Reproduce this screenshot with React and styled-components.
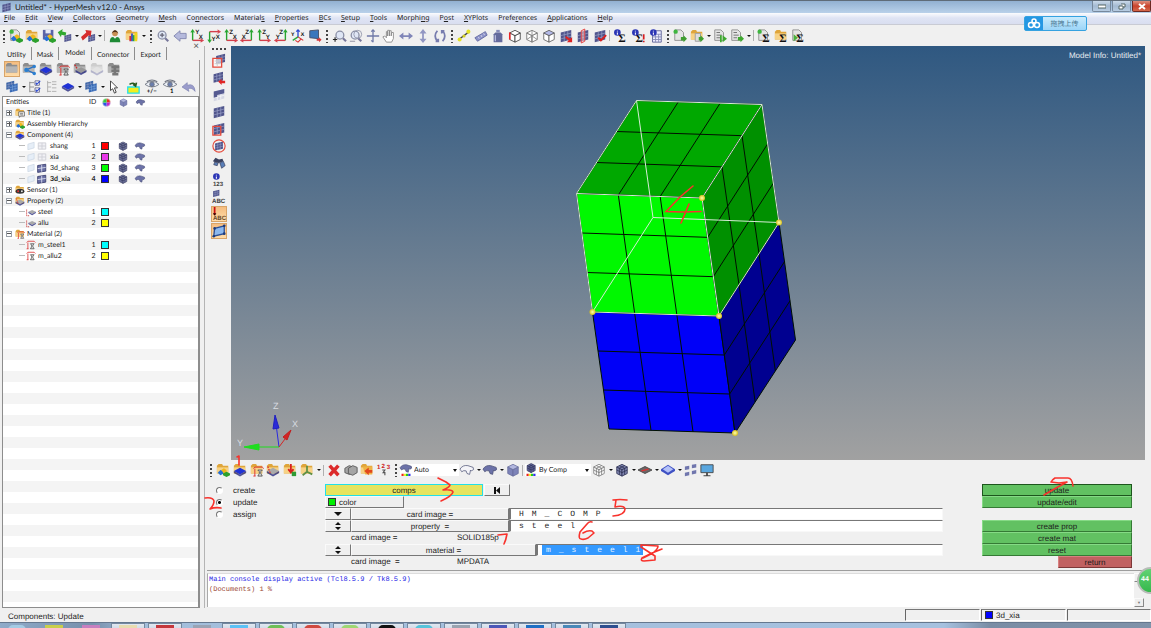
import React, { useState } from 'react';
import styled, { createGlobalStyle } from 'styled-components';

const GlobalStyle = createGlobalStyle`
  * { box-sizing: border-box; }
  body {
    margin: 0;
    background: #f0f0f0;
    color: #1c1c1c;
    font-family: "Liberation Sans", Arial, sans-serif;
    font-size: 8px;
    text-rendering: geometricPrecision;
  }
  button, input, select { font: inherit; color: inherit; margin: 0; text-rendering: inherit; }
`;

const Shell = styled.div`
  height: 100vh;
  display: flex;
  flex-direction: column;
  overflow: hidden;
  position: relative;
`;
const TitleBar = styled.header`
  height: 13px;
  display: flex;
  align-items: center;
  border-top: 1px solid #5f6b78;
  background: linear-gradient(#92b0d1, #b9d1ea);
  padding-left: 1px;
`;
const Title = styled.h1`
  flex: 1;
  margin: 0 0 0 3px;
  font: 400 8px/12px Lato, sans-serif;
`;
const WindowButton = styled.button`
  width: 19px;
  height: 11px;
  padding: 0;
  margin-left: 1px;
  display: flex;
  align-items: center;
  justify-content: center;
  align-self: flex-start;
  border: 1px solid ${props => props.$close ? '#6d2a22' : '#76889c'};
  border-top: none;
  border-radius: 0 0 2px 2px;
  background: ${props => props.$close
    ? 'linear-gradient(#dd8f7e, #c8432c 50%, #d4674b)'
    : 'linear-gradient(#cbdaea, #a3b9d1 50%, #b7cce2)'};
`;
const MenuBar = styled.nav`
  height: 12px;
  display: flex;
  gap: 10px;
  padding-left: 4px;
  background: linear-gradient(#fbfcfe, #dfe4f4 45%, #d9def0);
  border-bottom: 1px solid #c9cbd4;
`;
const MenuLink = styled.a`
  font: 7px/12px "Noto Sans", sans-serif;
  color: #222;
  text-decoration: none;
`;
const ToolBar = styled.div`
  height: ${props => props.$height || 21}px;
  flex: none;
  display: flex;
  align-items: center;
  position: relative;
`;
const Group = styled.div`
  width: ${props => props.$width}px;
  flex: none;
  display: flex;
  justify-content: space-between;
`;
const Handle = styled.span`
  width: 8px;
  height: 14px;
  flex: none;
  background: radial-gradient(circle at 4px 2px, #444 1px, transparent 1px) 0 0 / 8px 4px;
`;
const Divider = styled.span`
  width: 1px;
  height: 11px;
  margin: 0 2px 0 1px;
  flex: none;
  background: #b0b0b0;
`;
const Drop = styled.button`
  width: 7px;
  height: 14px;
  padding: 0;
  border: none;
  background: none;
  flex: none;
  display: flex;
  align-items: center;
  justify-content: center;
  &::after {
    content: "";
    border: 2px solid transparent;
    border-top-color: #111;
    border-bottom: none;
  }
`;
const IconButton = styled.button`
  width: 16px;
  height: 16px;
  padding: 0;
  flex: none;
  display: block;
  border: 1px solid ${props => props.$active ? '#d8a468' : 'transparent'};
  background: ${props => props.$active ? 'linear-gradient(#f5bd80, #ffdca8)' : 'none'};
`;
const Glyph = styled.svg`
  display: block;
  width: ${props => props.$size || 14}px;
  height: ${props => props.$size || 14}px;
  flex: none;
  overflow: visible;
`;

const Body = styled.div`
  flex: 1;
  min-height: 0;
  display: flex;
`;
const Browser = styled.aside`
  width: 205px;
  flex: none;
  display: flex;
  flex-direction: column;
  padding: 0 4px 0 2px;
  border-right: 1px solid #b4b4b4;
  position: relative;
  font-family: Lato, sans-serif;
  font-size: 7px;
`;
const CloseTab = styled.button`
  position: absolute;
  top: -4px;
  right: 5px;
  border: none;
  background: none;
  padding: 0;
  font-size: 10px;
  line-height: 8px;
  color: #555;
`;
const Tabs = styled.div`
  height: 14px;
  display: flex;
  padding-top: 1px;
`;
const Tab = styled.button`
  height: 13px;
  border: none;
  border-right: 1px solid #8d8d8d;
  background: none;
  padding: ${props => props.$active ? '0 6px 2px' : '2px 5px 0'};
  font-size: 7px;
`;
const BrowserTools = styled.div`
  height: 18px;
  display: flex;
  align-items: center;
  padding-left: 2px;
  gap: ${props => props.$gap || 0}px;
  border-right: 1px solid #9a9a9a;
`;
const TreePane = styled.div`
  flex: 1;
  min-height: 0;
  border: 1px solid #8d8d8d;
  border-width: 1px 2px 1px 1px;
  background: repeating-linear-gradient(#f4f4f4 0 11px, #fff 11px 22px) 0 10px;
  overflow: hidden;
`;
const TreeTable = styled.table`
  width: 100%;
  border-collapse: collapse;
  table-layout: fixed;
  th {
    height: 10px;
    padding: 0 0 0 3px;
    font-weight: 400;
    text-align: left;
    background: #fff;
    line-height: 9px;
  }
  th svg { margin-left: -2px; }
  td { height: 11px; padding: 0; line-height: 10px; }
`;
const Col = styled.col`
  width: ${props => props.$width ? `${props.$width}px` : 'auto'};
`;
const NodeCell = styled.div`
  display: flex;
  align-items: center;
  gap: 1px;
  height: 11px;
  padding-left: ${props => props.$depth ? 16 : 3}px;
  font-weight: ${props => props.$bold ? 700 : 400};
  white-space: nowrap;
`;
const NodeText = styled.span`
  padding-left: ${props => props.$wide ? 2 : 1}px;
`;
const Branch = styled.span`
  width: 6px;
  height: 1px;
  flex: none;
  background: #bbb;
`;
const Expander = styled.button`
  width: 6px;
  height: 6px;
  flex: none;
  padding: 0;
  margin-right: 2px;
  border: 1px solid #9aa0a8;
  background: linear-gradient(#555, #555) center / 4px 1px no-repeat,
    linear-gradient(#555, #555) center / 1px ${props => props.$open ? 1 : 4}px no-repeat, #fff;
`;
const IdCell = styled.td`
  text-align: center;
  font-weight: ${props => props.$bold ? 700 : 400};
`;
const Swatch = styled.span`
  display: inline-block;
  width: 8px;
  height: 8px;
  border: 1px solid #333;
  background: ${props => props.$color};
  vertical-align: middle;
`;

const Work = styled.main`
  flex: 1;
  min-width: 0;
  display: flex;
  flex-direction: column;
  padding: 0 6px 0 2px;
`;
const Stage = styled.div`
  flex: 1;
  min-height: 0;
  display: flex;
`;
const SideTools = styled.div`
  width: 24px;
  flex: none;
  display: flex;
  flex-direction: column;
  align-items: center;
  gap: 1px;
  padding-right: 1px;
  &::before {
    content: "";
    width: 15px;
    height: 6px;
    background: radial-gradient(circle at 2px 3px, #444 1px, transparent 1px) 0 0 / 4px 8px;
  }
`;
const Viewport = styled.section`
  flex: 1;
  min-width: 0;
  position: relative;
  background: linear-gradient(#2f5881, #a1a1a1);
`;
const Scene = styled.svg`
  display: block;
  width: 100%;
  height: 100%;
`;
const ModelInfo = styled.p`
  position: absolute;
  top: 5px;
  right: 4px;
  margin: 0;
  color: #e8edf2;
  line-height: 10px;
`;
const Combo = styled.label`
  display: flex;
  align-items: center;
  gap: 2px;
  flex: none;
  width: ${props => props.$width}px;
  height: 12px;
  background: #fff;
  select {
    flex: 1;
    min-width: 0;
    appearance: none;
    border: none;
    background: none;
    padding: 0;
    font: 7px/11px Lato, sans-serif;
  }
  &::after {
    content: "";
    margin: 0 2px 0 0;
    border: 2px solid transparent;
    border-top: 3px solid #111;
    border-bottom: none;
  }
`;

const Panel = styled.form`
  height: 91px;
  flex: none;
  display: flex;
  padding: 4px 13px 0 9px;
  border-bottom: 1px solid #9d9d9d;
`;
const Modes = styled.div`
  width: 109px;
  flex: none;
  position: relative;
`;
const Mode = styled.label`
  display: flex;
  align-items: center;
  gap: 10px;
  height: 12px;
  input {
    appearance: none;
    width: 7px;
    height: 7px;
    border-radius: 50%;
    border: 1px solid;
    border-color: #777 #fff #fff #777;
    background: #fff;
  }
  input:checked { background: radial-gradient(circle, #000 1px, #fff 2px); }
`;
const Fields = styled.div`
  flex: 1;
  min-width: 0;
  position: relative;
`;
const Row = styled.div`
  display: flex;
  height: 12px;
  padding-left: ${props => props.$indent || 0}px;
  line-height: 12px;
`;
const FlatButton = styled.button`
  width: ${props => props.$width}px;
  height: 12px;
  flex: none;
  padding: 0 4px 0 ${props => props.$left ? 2 : 4}px;
  display: flex;
  align-items: center;
  gap: 3px;
  justify-content: ${props => props.$left ? 'flex-start' : 'center'};
  border: 1px solid;
  border-color: #fafafa #777 #777 #fafafa;
  background: #efefef;
  line-height: 9px;
`;
const CompsButton = styled(FlatButton)`
  background: #e6e45e;
  border-color: #22e0e8;
  margin-right: 1px;
`;
const Entry = styled.div`
  flex: 1;
  min-width: 0;
  height: 12px;
  border: 1px solid;
  border-color: #777 #f8f8f8 #f8f8f8 #777;
  border-left-width: 2px;
  background: #fff;
  padding-left: ${props => props.$selected ? 4 : 8}px;
  input {
    display: block;
    width: ${props => props.$selected ? '101px' : '100%'};
    height: 10px;
    border: none;
    outline: none;
    padding: 1px 0 0 ${props => props.$selected ? 4 : 0}px;
    font: 8px/9px "Liberation Mono", monospace;
    letter-spacing: 8px;
    color: ${props => props.$selected ? '#e9f4ff' : '#222'};
    background: ${props => props.$selected ? '#3399ff' : 'none'};
  }
`;
const Plain = styled.span`
  width: ${props => props.$width}px;
`;
const Actions = styled.div`
  width: 150px;
  flex: none;
  margin-left: 39px;
  position: relative;
`;
const ActionButton = styled.button`
  display: block;
  width: ${props => props.$danger ? 74 : 150}px;
  height: 12px;
  margin-top: ${props => props.$spaced ? 12 : 0}px;
  margin-left: ${props => props.$danger ? 'auto' : 0};
  padding: 0;
  line-height: 9px;
  border: 1px solid;
  border-color: ${props => props.$danger ? '#d98080 #7d3838 #7d3838 #d98080' : '#86da86 #357a35 #357a35 #86da86'};
  background: ${props => props.$danger ? '#c16161' : '#62c162'};
  outline: ${props => props.$focused ? '1px solid #1d561d' : 'none'};
  outline-offset: -1px;
`;
const Console = styled.div`
  height: 37px;
  flex: none;
  display: flex;
  padding-top: 2px;
  padding-bottom: 1px;
`;
const Output = styled.pre`
  flex: 1;
  margin: 0;
  padding: 1px;
  background: #fff;
  border-left: 1px solid #aaa;
  border-top: 1px solid #ddd;
  font: 7px/10px "Liberation Mono", monospace;
  color: #9b4a36;
  b { font-weight: 400; color: #2525e6; }
`;
const Scroll = styled.div`
  width: 11px;
  display: flex;
  flex-direction: column;
  justify-content: space-between;
`;
const ScrollButton = styled.button`
  width: 10px;
  height: 9px;
  padding: 0;
  border: 1px solid;
  border-color: #fafafa #888 #888 #fafafa;
  background: #efefef;
  font-size: 4px;
  line-height: 6px;
  color: #777;
`;
const StatusBar = styled.footer`
  height: 14px;
  flex: none;
  display: flex;
  align-items: center;
  padding-left: 8px;
`;
const StatusText = styled.span`
  flex: 1;
  line-height: 12px;
  padding-top: 3px;
`;
const StatusCell = styled.span`
  width: ${props => props.$width}px;
  height: 12px;
  display: flex;
  align-items: center;
  gap: 3px;
  padding-left: 3px;
  margin-left: 1px;
  border: 1px solid;
  border-color: #777 #fff #fff #666;
`;
const TaskBar = styled.div`
  height: 6px;
  flex: none;
  display: flex;
  border-top: 1px solid #65788f;
  background: linear-gradient(90deg, #8fabc9, #7790ac 8%, #a3bedb 12%, #a6c1df 82%, #7a8da5 86%, #8093aa);
  overflow: hidden;
`;
const Task = styled.button`
  width: 34px;
  height: 12px;
  flex: none;
  margin-right: 3px;
  padding: 1px 0 0;
  border: 1px solid ${props => props.$bare ? 'transparent' : '#74889f'};
  background: ${props => props.$bare ? 'none' : 'linear-gradient(#e1e8f1, #bdcbdc)'};
  &::before {
    content: "";
    display: block;
    width: 18px;
    height: 10px;
    margin: 0 auto;
    border-radius: ${props => props.$round ? '9px' : '0'};
    background: ${props => props.$color};
  }
`;
const Upload = styled.button`
  position: absolute;
  top: 16px;
  right: 64px;
  width: 63px;
  height: 15px;
  padding: 0;
  display: flex;
  border: 1px solid #35a2e0;
  border-radius: 2px;
  background: linear-gradient(#c9ebfd, #9bd5f8);
  color: #49758f;
  font: 7px/15px "Noto Sans CJK SC", sans-serif;
  span { flex: 1; }
`;
const UploadIcon = styled.i`
  width: 18px;
  height: 13px;
  display: flex;
  align-items: center;
  justify-content: center;
  background: #2497e3;
`;
const Bubble = styled.div`
  position: absolute;
  right: -13px;
  bottom: 34px;
  width: 27px;
  height: 27px;
  border: 2px solid #b9bdb9;
  border-radius: 50%;
  background: linear-gradient(#62d274, #35b84c);
  color: #fff;
  font: 700 7px/22px "Liberation Sans", sans-serif;
  padding-left: 2px;
`;
const Mark = styled.svg`
  position: absolute;
  left: ${props => props.$x}px;
  top: ${props => props.$y}px;
  width: 32px;
  height: 28px;
  overflow: visible;
  pointer-events: none;
  fill: none;
  stroke: #f8322c;
  stroke-width: 1.6;
  stroke-linecap: round;
  stroke-linejoin: round;
`;

// shared pieces of the toolbar drawings, all on a 16x16 field
const Mesh = ({ t, fill = '#50558c', line = '#a3a9d0' }) => (
  <g transform={t}>
    <path d="M2 4L14 1V12L2 15Z" fill={fill} />
    <path d="M6 3V14M10 2V13M2 7.6L14 4.6M2 11.3L14 8.3" stroke={line} strokeWidth=".7" fill="none" />
  </g>
);
const Folder = ({ gray }) => (
  <g>
    <path d="M1 3L3 1H7L8 3H14V12H1Z" fill={gray ? '#8d8d8d' : '#dfa53a'} />
    <path d="M1 5H14V12H1Z" fill={gray ? '#b5b5b5' : '#f7d285'} />
  </g>
);
const Page = () => <path d="M2 1H9L12 4V13H2Z" fill="#e4e4e4" stroke="#8b8b8b" />;
const Slab = ({ fill = '#2033d6', t }) => (
  <g transform={t}>
    <path d="M1 9L8 5.5L15 9L8 13Z" fill={fill} />
    <path d="M1 9V11.5L8 15.5L15 11.5V9L8 13Z" fill="#1b1f78" opacity=".75" />
  </g>
);
const Blobs = () => (
  <g>
    <path d="M2 11L5 8L9 9V12L5 14Z" fill="#256fd6" />
    <path d="M6 8L9 6L12 8V11L9 12Z" fill="#f0b71c" />
    <path d="M8 12L12 10L16 12V14L12 16L8 14Z" fill="#2da02d" />
  </g>
);
const Lens = () => (
  <g>
    <circle cx="7" cy="7" r="4.5" fill="#dfe6f5" stroke="#8a8fa5" strokeWidth="1.5" />
    <path d="M10.5 10.5L14 14" stroke="#77779a" strokeWidth="2.4" />
  </g>
);
const Cube = ({ fill = '#fff', top = fill, line = '#333', grid }) => (
  <g stroke={line} strokeWidth=".9" strokeLinejoin="round">
    <path d="M2 4.5L8 7.5V15L2 12Z" fill={fill} />
    <path d="M14 4.5L8 7.5V15L14 12Z" fill={fill} />
    <path d="M2 4.5L8 1.5L14 4.5L8 7.5Z" fill={top} />
    {grid && <path d="M5 3L11 6V13.5M11 3L5 6V13.5M2 8L8 11L14 8" fill="none" />}
  </g>
);
const Arrow = ({ fill, t }) => <path transform={t} d="M1 6L6 1V4H11V8H6V11Z" fill={fill} />;
const Surf = ({ fill = '#6c72a8' }) => (
  <path d="M0 7Q3 2 9 3L15 5Q17 8 13 9L12 8L11 13L8 12L7 9Q4 8 2 10Z" fill={fill} stroke="#454a70" strokeWidth=".8" />
);
const Axes = ({ a, b, flip, low }) => (
  <g fill="none" strokeWidth="1.6">
    <path d={flip ? 'M13 2V13' : low ? 'M3 3V14' : 'M3 2V13'} stroke="#26a52f" />
    <path d={flip ? 'M13 13H2' : low ? 'M3 3H14' : 'M3 13H14'} stroke="#d43f4b" />
    <path d={flip ? 'M11 4L13 1L15 4' : low ? 'M1 12L3 15L5 12' : 'M1 4L3 1L5 4'} stroke="#26a52f" strokeWidth="1.2" />
    <path d={flip ? 'M4 11L1 13L4 15' : low ? 'M12 1L15 3L12 5' : 'M12 11L15 13L12 15'} stroke="#d43f4b" strokeWidth="1.2" />
    <text x={flip ? 6 : low ? 5 : 6} y={low ? 14 : 6} fontSize="7" fontWeight="700" fill="#222">{a}</text>
    <text x={flip ? 2 : 10} y="11" fontSize="7" fontWeight="700" fill="#222">{b}</text>
  </g>
);
const Sigma = ({ x = 6 }) => (
  <text x={x} y="15" fontSize="13" fontWeight="700" fontFamily="Liberation Serif" fill="#111">Σ</text>
);
const Info = () => (
  <g>
    <circle cx="5" cy="4" r="3.8" fill="#2b35b5" />
    <path d="M5 2V2.8M5 4V6.5" stroke="#fff" strokeWidth="1.2" />
  </g>
);
const Eye = () => (
  <g fill="none" stroke="#6f7480">
    <path d="M0 5Q8 -2 16 5Q8 11 0 5Z" fill="#eef2f8" />
    <circle cx="8" cy="5" r="2.6" fill="#6a7eae" />
    <path d="M2 2Q8 -2 14 2" strokeWidth="1.4" />
  </g>
);
const Mat = () => (
  <g fill="none" strokeWidth="1.3">
    <path d="M1 4L3 2H13L15 4M3 4V14M1 14H4" stroke="#d33" />
    <path d="M7 6H13L11 8V11L13 14H7L9 11V8Z" stroke="#555" fill="#eee" />
  </g>
);
const Spectrum = () => (
  <g>
    <path d="M2 13H5V16H2Z" fill="#e22" />
    <path d="M5 13H8V16H5Z" fill="#ee2" />
    <path d="M8 13H11V16H8Z" fill="#2c2" />
    <path d="M11 13H14V16H11Z" fill="#33e" />
  </g>
);

const glyphs = {
  newDoc: <><Page /><Blobs /><circle cx="3" cy="3" r="2.5" fill="#3fb53f" /></>,
  open: <><Folder /><Blobs /></>,
  save: <><path d="M1 1H13V12H1Z" fill="#5a64a8" /><path d="M4 1H10V5H4Z" fill="#e5e8f5" /><path d="M4 8H10V12H4Z" fill="#b7bfe3" /><Blobs /></>,
  importFile: <><Mesh t="translate(6 5) scale(.65)" /><Arrow fill="#31a92f" t="translate(0 -2) rotate(12) scale(.95)" /></>,
  exportFile: <><Mesh t="translate(7 5) scale(.65)" /><path d="M0 9L6 4L5 1L12 2L11 9L9 7L2 13Z" fill="#d62d2d" /></>,
  user: <><circle cx="8" cy="5" r="3.2" fill="#c98f53" /><path d="M4 5Q8 -3 12 5Q8 2 4 5Z" fill="#4b2d17" /><path d="M2 15Q2 9 6 9L8 11L10 9Q14 9 14 15Z" fill="#1f8a36" /></>,
  loadUser: <><Folder /><path d="M7 5H9V14H7Z" fill="#2948d0" /><path d="M9 7H11V14H9Z" fill="#28a83b" /><path d="M11 4H14V14H11Z" fill="#f0d51e" /><path d="M5 8H7V14H5Z" fill="#d62d2d" /></>,
  zoomIn: <><Lens /><path d="M4.5 7H9.5M7 4.5V9.5" stroke="#667" strokeWidth="1.5" /></>,
  back: <path d="M1 8L8 2V5H15V11H8V14Z" fill="#b5b9dc" stroke="#8085ae" />,
  xyTop: <Axes a="Y" b="X" />,
  xyBottom: <Axes a="Y" b="X" low />,
  xzLeft: <Axes a="Z" b="X" />,
  xzRight: <Axes a="Z" b="X" flip />,
  yzLeft: <Axes a="Z" b="Y" />,
  yzRight: <Axes a="Z" b="Y" flip />,
  iso: <><path d="M8 9V1M6 3L8 1L10 3" stroke="#2948d0" strokeWidth="1.5" fill="none" /><path d="M8 9L2 13" stroke="#28a83b" strokeWidth="1.5" /><path d="M8 9L14 13M5 13L8 15L12 11" fill="none" stroke="#d62d2d" strokeWidth="1.3" /><text x="0" y="8" fontSize="6" fontWeight="700">Y</text><text x="11" y="8" fontSize="6" fontWeight="700">X</text></>,
  userView: <><path d="M2 2L12 1V11L2 10Z" fill="#3a77bd" stroke="#444d66" /><Arrow fill="#d6373a" t="translate(16 9) scale(-.55 .55)" /></>,
  fit: <><g transform="translate(2 0)"><Lens /></g><path d="M1 12H6M3.5 9.5V14.5" stroke="#222" strokeWidth="1.3" /></>,
  zoomWin: <><Lens /><circle cx="10" cy="6" r="4.5" fill="none" stroke="#9297ac" /><path d="M1 14H7" stroke="#889" /></>,
  cross: <path d="M8 1V15M1 8H15M6 3L8 1L10 3M6 13L8 15" fill="none" stroke="#707aa8" strokeWidth="1.5" />,
  hand: <path d="M5 15L1 9L3 8L5 10V3L6.5 3V8V1.5H8.5V8V2H10.5V8L11 4H13V11L11 15Z" fill="#fff" stroke="#888" />,
  leftRight: <path d="M0 8L5 4V7H11V4L16 8L11 12V9H5V12Z" fill="#8086b8" />,
  upDown: <path d="M8 0L12 5H9V11H12L8 16L4 11H7V5H4Z" fill="#9196c2" />,
  spin: <path d="M5 2Q0 8 5 14M3 14H6V11M11 14Q16 8 11 2M13 2H10V5" fill="none" stroke="#777cae" strokeWidth="2" />,
  distance: <><path d="M2 12L14 3" stroke="#444" strokeWidth="1.5" /><circle cx="3" cy="12" r="2.3" fill="#e4e222" /><circle cx="13" cy="3" r="2.3" fill="#e4e222" /><circle cx="8" cy="8" r="1.8" fill="#d3d022" /></>,
  ruler: <><path d="M1 10L13 3L15 7L4 14Z" fill="#8d93c9" stroke="#6268a0" /><path d="M5 9L6 11M8 7L9 9M11 5L12 7" stroke="#dde" /></>,
  mass: <><path d="M5 4H11L13 6V15H3V6Z" fill="#646a9c" /><path d="M6 1H10V4H6Z" fill="#868bb8" /><path d="M5 7V14" stroke="#b4b8dc" strokeWidth="1.5" /></>,
  cubeRed: <><Cube /><path d="M2 4V12" stroke="#e22" strokeWidth="1.8" /></>,
  cubeWire: <><Cube line="#666" /><path d="M8 2V15M2 12L8 8L14 12" stroke="#888" fill="none" /></>,
  cubeTop: <Cube top="#b3b9e8" line="#555" />,
  meshArrow: <><Mesh /><path d="M8 8L13 11L15 9V15H9L11 13L7 10Z" fill="#dc2323" /></>,
  meshCut: <><Mesh /><path d="M6 2L10 0V14L6 16Z" fill="#f3b5b599" stroke="#e23a3a" /></>,
  meshCheck: <><Mesh /><path d="M6 10L9 13L15 7" fill="none" stroke="#d81f1f" strokeWidth="2.4" /></>,
  sigmaInfo: <><Sigma /><Info /></>,
  sigmaBang: <><Sigma x={5} /><Info /><path d="M14.5 6V12M14.5 13.5V15" stroke="#d81f1f" strokeWidth="2" /></>,
  table: <><path d="M4 2H14V15H4Z" fill="#eef" stroke="#5a5f94" /><path d="M4 6H14M4 9H14M4 12H14M7.5 6V15M11 6V15" stroke="#8489b5" /><Info /></>,
  docNew: <><Page /><path d="M9 9H12V7L16 11L12 15V13H9Z" fill="#3f9e2f" /><circle cx="3" cy="3" r="2.5" fill="#3fb53f" /></>,
  docOpen: <><Folder /><path d="M6 5H12V14H6Z" fill="#ddd" stroke="#999" /><path d="M10 9H12V7L16 11L12 15V13H10Z" fill="#3f9e2f" /></>,
  docRun: <><Page /><path d="M4 4H8M4 7H10M4 10H8" stroke="#666" /><path d="M8 7H10V15H8ZM11 7L16 11L11 15Z" fill="#3fa92f" /></>,
  docNext: <><Page /><path d="M4 4H8M4 7H10M4 10H8" stroke="#666" /><path d="M9 9H12V7L16 11L12 15V13H9Z" fill="#3fa92f" /></>,
  sigmaNew: <><Page /><Sigma /><circle cx="3" cy="3" r="2.5" fill="#3fb53f" /></>,
  sigmaOpen: <><Folder /><Sigma /></>,
  sigmaDoc: <><Page /><path d="M3 6L8 10L3 14Z" fill="#4bb13b" /><Sigma /></>,
  folderGray: <Folder gray />,
  share: <><Folder gray /><path d="M5 9L14 5M5 9L14 13" stroke="#2b6fc0" strokeWidth="1.3" /><circle cx="5" cy="9" r="2.5" fill="#2b7fd0" /><circle cx="14" cy="5" r="2" fill="#2b7fd0" /><circle cx="14" cy="13" r="2" fill="#2b7fd0" /></>,
  folderSlab: <><Folder gray /><Slab /></>,
  folderMat: <><Folder gray /><g transform="translate(3 3) scale(.85)"><Mat /></g></>,
  folderProp: <><Folder gray /><Slab fill="#999" t="translate(2 1) scale(.9)" /><path d="M2 3L5 8" stroke="#c33" strokeWidth="1.5" strokeDasharray="2 1" /></>,
  pale: <g opacity=".35"><Folder gray /><Slab fill="#ccc" /></g>,
  loads: <><Folder gray /><path d="M9 4V15M5 6H14M5 10H14M6 14H13" stroke="#777" strokeWidth="3" /></>,
  comps: <><Mesh t="scale(.75)" fill="#3b64a4" /><Mesh t="translate(4 3) scale(.75)" fill="#3969b4" line="#8bb4e6" /></>,
  treeCheck: <><path d="M2 2V14M2 3H7M2 8H7M2 13H7" stroke="#888" fill="none" /><path d="M8 1H13V6H8ZM8 9H13V14H8Z" fill="#fff" stroke="#668" /><path d="M9 3L10 5L14 1M9 11L10 13L14 9" stroke="#2b49d0" fill="none" strokeWidth="1.3" /></>,
  treeUncheck: <path d="M3 1V14M3 3H7M3 8H7M3 13H7M8 2H13M8 5H13M8 9H13M8 13H13" stroke="#aaa" fill="none" />,
  slab: <Slab t="translate(0 -2)" />,
  pointer: <path d="M4 1L12 9H8.5L10.5 14L8.5 15L6.5 10L4 12Z" fill="#fff" stroke="#333" />,
  highlight: <><path d="M2 8H15V15H2Z" fill="#f3ee1d" stroke="#27dfe8" strokeWidth="1.5" /><path d="M4 5Q9 2 11 6M8 5L11 7L12 3" stroke="#265a1e" strokeWidth="1.8" fill="none" /></>,
  eyeBoth: <><Eye /><text x="2" y="15" fontSize="7" fontWeight="700">+/−</text></>,
  eyeOne: <><Eye /><text x="8" y="15" fontSize="7" fontWeight="700">1</text></>,
  undo: <path d="M0 8L6 3V6Q14 3 15 13Q11 8 7 10L8 13Z" fill="#9a9ccb" stroke="#7a7eae" strokeWidth=".7" />,
  wheel: <><path d="M8 8V1A7 7 0 0 1 15 8Z" fill="#e2361e" /><path d="M8 8H15A7 7 0 0 1 8 15Z" fill="#c126cd" /><path d="M8 8V15A7 7 0 0 1 1 8Z" fill="#2a55e4" /><path d="M8 8H1A7 7 0 0 1 8 1Z" fill="#35cf3b" /><circle cx="8" cy="8" r="7" fill="none" stroke="#ddd" /></>,
  cubeFill: <Cube fill="#7d83b8" top="#b2b7df" line="#666c9c" />,
  cubeGrid: <Cube fill="#8086b0" grid line="#2b2f52" />,
  cubeOutline: <Cube grid line="#777" />,
  surf: <Surf />,
  surfPale: <Surf fill="#f4f4f8" />,
  paleSheet: <path d="M3 5L13 2V11L3 14Z" fill="#e6eef7" stroke="#c5d2e0" />,
  paleGrid: <path d="M2 3H14V13H2ZM8 3V13M2 8H14" fill="#f1f1f5" stroke="#cfd0d6" strokeWidth="1.5" />,
  darkGrid: <><path d="M1 4L14 2V13L1 15Z" fill="#6a70a4" stroke="#34396a" strokeWidth="1.3" /><path d="M7.5 3V14M1 9L14 7" stroke="#e3e6f5" strokeWidth="1.3" /></>,
  folderTitle: <><Folder /><path d="M6 6H15V13H9L7 15V13H6Z" fill="#fff" stroke="#333" /><path d="M8 8.5H13M8 11H13" stroke="#333" /></>,
  folderBlobs: <><Folder /><Blobs /></>,
  folderComp: <><Folder /><Slab /></>,
  folderSensor: <><Folder /><ellipse cx="8" cy="10" rx="7" ry="4" fill="#333" /><circle cx="5" cy="10" r="1.5" fill="#e33" /><circle cx="11" cy="10" r="1.5" fill="#e9e9e9" /></>,
  folderProperty: <><Folder /><Slab fill="#aaa" /><path d="M2 4L5 12" stroke="#d33" strokeWidth="1.5" strokeDasharray="2 1" /></>,
  folderMaterial: <><Folder /><g transform="translate(3 3) scale(.85)"><Mat /></g></>,
  property: <><Slab fill="#aaa" t="translate(3 0) scale(.85)" /><path d="M1 4V14L6 14" stroke="#c44" fill="none" strokeWidth="1.5" strokeDasharray="2 1" /></>,
  material: <Mat />,
  loadFolder: <><Folder /><path d="M9 1V9M6 7L9 11L12 7" stroke="#d81f1f" fill="none" strokeWidth="2" /><path d="M10 10H15V15H10Z" fill="#2f9a35" /></>,
  axisFolder: <><Folder /><path d="M8 3V10L3 14M8 10L14 13" stroke="#5f9045" fill="none" strokeWidth="2" /></>,
  remove: <path d="M3 3L13 14M13 3L3 14" stroke="#dc2a2a" strokeWidth="4" />,
  stack: <g fill="#a5a5a5" stroke="#555"><path d="M1 6L6 3L11 5V10L6 13L1 11Z" /><path d="M5 6L10 3L15 5V11L10 14L5 12Z" /></g>,
  move: <><Folder /><path d="M3 4H14V13H6Z" fill="#efb445" /><path d="M5 9L10 5V8H14V11H10V14Z" fill="#e2471d" /></>,
  renumber: <g fontSize="7" fontWeight="700"><text x="0" y="7" fill="#c22">1</text><text x="5" y="6" fill="#c22">2</text><text x="11" y="7" fill="#c22">3</text><path d="M6 8H9L7 11H9V14" fill="none" stroke="#555" strokeWidth="1.3" /></g>,
  slabRed: <><path d="M0 8L8 4L16 8L8 12Z" fill="#6b6767" stroke="#444" /><path d="M4 9L12 7" stroke="#d33" strokeWidth="1.5" /></>,
  slabBlue: <><path d="M0 7L8 2L16 7V9L8 14L0 9Z" fill="#3f51c4" /><path d="M2 7L8 3L14 7L8 11Z" fill="#b4c2f8" /></>,
  pieces: <path d="M1 4L6 3V7L1 8ZM9 2L14 1V5L9 6ZM1 11L6 10V14L1 15ZM9 9L14 8V12L9 13Z" fill="#7076ad" />,
  monitor: <><path d="M1 2H15V11H1Z" fill="#5aa7df" stroke="#444" /><path d="M7 11H9V14H12V15H4V14H7Z" fill="#444" /></>,
  shadeCombo: <><g transform="translate(0 -2)"><Surf /></g><Spectrum /></>,
  cubeCombo: <><g transform="translate(1 -2) scale(.9)"><Cube fill="#6469a0" grid line="#2b2f52" /></g><Spectrum /></>,
  maskBox: <><Mesh t="translate(3 -1) scale(.85)" /><path d="M1 5H11V15H1Z" fill="#fff8" stroke="#e54a3c" strokeWidth="1.5" /><path d="M3 8H10M3 11H10M6 6V14" stroke="#ccc" /></>,
  maskArrow: <><Mesh t="scale(.9)" /><path d="M7 12L11 9V11H15V14H11V16Z" fill="#e02626" /></>,
  maskHalf: <><Mesh fill="#d5d7e4" line="#fff" /><path d="M2 4L14 1V6L6 8V10L2 11Z" fill="#555a91" /></>,
  meshFull: <Mesh />,
  meshBox: <><Mesh /><path d="M1 5H10V15H1Z" fill="none" stroke="#e54a3c" strokeWidth="1.5" /></>,
  meshCircle: <><Mesh t="translate(2 2) scale(.75)" /><circle cx="8" cy="8" r="7" fill="none" stroke="#e54a3c" strokeWidth="1.3" /></>,
  find: <><path d="M1 6L4 2L8 4L12 3L13 6L8 8L4 7Z" fill="#39415f" /><path d="M3 7L7 8L6 11L2 10ZM9 8L13 6L15 11L11 14Z" fill="#5a7fb8" stroke="#39415f" strokeWidth=".8" /></>,
  numbers: <><Info /><text x="1" y="15" fontSize="7" fontWeight="700" fill="#444">123</text></>,
  names: <><Mesh t="translate(0 -1) scale(.6)" /><text x="0" y="15" fontSize="7" fontWeight="700" fill="#444">ABC</text></>,
  loadNames: <><path d="M3 0V9" stroke="#c11" strokeWidth="2" /><path d="M1 7L3 10L5 7Z" fill="#300" /><text x="1" y="15" fontSize="7" fontWeight="700" fill="#6b4a2c">ABC</text></>,
  shape: <><path d="M3 5L14 2V11L2 14Z" fill="#8db9ee" stroke="#2c4f94" strokeWidth="1.5" /><circle cx="3" cy="5" r="1.5" fill="#1c3b7c" /><circle cx="14" cy="2" r="1.5" fill="#1c3b7c" /><circle cx="14" cy="11" r="1.5" fill="#1c3b7c" /><circle cx="2" cy="14" r="1.5" fill="#1c3b7c" /></>,
};

const Icon = ({ name, size }) => <Glyph viewBox="0 0 16 16" $size={size} aria-hidden="true">{glyphs[name]}</Glyph>;
const Tool = ({ name, active }) => (
  <IconButton type="button" aria-label={name} $active={active}><Icon name={name} /></IconButton>
);
const Tools = ({ names, width }) => (
  <Group $width={width}>{names.map(name => <Tool key={name} name={name} />)}</Group>
);
const DropArrow = () => <Drop type="button" aria-label="more" />;

const menus = [
  ['', 'F', 'ile'], ['', 'E', 'dit'], ['', 'V', 'iew'], ['', 'C', 'ollectors'], ['', 'G', 'eometry'],
  ['', 'M', 'esh'], ['Co', 'n', 'nectors'], ['Material', 's', ''], ['', 'P', 'roperties'], ['', 'B', 'Cs'],
  ['', 'S', 'etup'], ['', 'T', 'ools'], ['Morphi', 'n', 'g'], ['P', 'o', 'st'], ['', 'X', 'YPlots'],
  ['Prefe', 'r', 'ences'], ['', 'A', 'pplications'], ['', 'H', 'elp'],
];

const nodes = [
  { text: 'Title (1)', icon: 'folderTitle' },
  { text: 'Assembly Hierarchy', icon: 'folderBlobs' },
  { text: 'Component (4)', icon: 'folderComp', open: true },
  { text: 'shang', id: 1, color: '#f00', comp: true },
  { text: 'xia', id: 2, color: '#e838e8', comp: true },
  { text: '3d_shang', id: 3, color: '#0f0', comp: true, shown: true },
  { text: '3d_xia', id: 4, color: '#00f', comp: true, shown: true, bold: true },
  { text: 'Sensor (1)', icon: 'folderSensor' },
  { text: 'Property (2)', icon: 'folderProperty', open: true },
  { text: 'steel', id: 1, color: '#0ff', icon: 'property' },
  { text: 'allu', id: 2, color: '#ff0', icon: 'property' },
  { text: 'Material (2)', icon: 'folderMaterial', open: true },
  { text: 'm_steel1', id: 1, color: '#0ff', icon: 'material' },
  { text: 'm_allu2', id: 2, color: '#ff0', icon: 'material' },
];

const TreeRow = ({ node }) => (
  <tr>
    <td>
      <NodeCell $depth={node.id ? 1 : 0} $bold={node.bold}>
        {node.id ? <Branch /> : <Expander type="button" aria-label={node.text} $open={node.open} />}
        {node.comp && <Icon name="paleSheet" size={10} />}
        <Icon name={node.comp ? (node.shown ? 'darkGrid' : 'paleGrid') : node.icon} size={10} />
        <NodeText $wide={node.comp}>{node.text}</NodeText>
      </NodeCell>
    </td>
    <IdCell $bold={node.bold}>{node.id}</IdCell>
    <td>{node.color && <Swatch $color={node.color} />}</td>
    <td>{node.comp && <Icon name="cubeGrid" size={10} />}</td>
    <td>{node.comp && <Icon name="surf" size={10} />}</td>
  </tr>
);

const lerp = (p, q, t) => [p[0] + (q[0] - p[0]) * t, p[1] + (q[1] - p[1]) * t];

// one face of a block, split 3 by 3
const Face = ({ pts, fill }) => {
  const [a, b, c, d] = pts;
  const lines = [];
  [1 / 3, 2 / 3].forEach(t => {
    lines.push([lerp(a, b, t), lerp(d, c, t)], [lerp(a, d, t), lerp(b, c, t)]);
  });
  return (
    <g stroke="#001000" strokeWidth="1">
      <polygon points={pts.join(' ')} fill={fill} />
      {lines.map(([p, q], i) => <line key={i} x1={p[0]} y1={p[1]} x2={q[0]} y2={q[1]} />)}
    </g>
  );
};

const P = {
  a: [636.5, 100.5], b: [762, 104.5], c: [702, 198], d: [576.5, 193.5],
  e: [592.5, 312], f: [719, 316], g: [779, 222.5], h: [653, 217.5],
  i: [609, 429], j: [735, 433], k: [795.5, 340],
};

const Model = () => (
  <Scene viewBox="231 46 914 414" preserveAspectRatio="xMidYMid meet">
    <defs>
      <radialGradient id="bead">
        <stop offset="0" stopColor="#ffffb0" />
        <stop offset="1" stopColor="#d8c020" />
      </radialGradient>
    </defs>
    <Face pts={[P.e, P.f, P.j, P.i]} fill="#0000f8" />
    <Face pts={[P.f, P.g, P.k, P.j]} fill="#000090" />
    <Face pts={[P.a, P.b, P.c, P.d]} fill="#00a800" />
    <Face pts={[P.d, P.c, P.f, P.e]} fill="#00f800" />
    <Face pts={[P.c, P.b, P.g, P.f]} fill="#009000" />
    <g fill="none" stroke="#d5ecd5" strokeWidth="1">
      <polygon points={[P.a, P.b, P.g, P.f, P.e, P.d].join(' ')} />
      <polyline points={[P.d, P.c, P.b].join(' ')} />
      <polyline points={[P.c, P.f].join(' ')} />
      <polyline points={[P.a, P.h, P.g].join(' ')} />
      <polyline points={[P.h, P.e].join(' ')} />
    </g>
    {[P.c, P.g, P.e, P.f, P.j].map(p => <circle key={p} cx={p[0]} cy={p[1]} r="3" fill="url(#bead)" />)}
    <path d="M693 186L680 197L666 211.5L683 212L701 211.5M689 204L681 223" fill="none" stroke="#f8322c" strokeWidth="1.6" strokeLinecap="round" />
    <g strokeWidth="1" fontSize="9" fontFamily="Liberation Sans">
      <path d="M279 447L276 424" stroke="#2a2ae0" />
      <path d="M275 415L273 429L279 428Z" fill="#2a2ad8" stroke="#2020c0" />
      <path d="M279 447H258" stroke="#1fdc1f" />
      <path d="M244 447L259 444V450Z" fill="#1fdc1f" stroke="#1fdc1f" />
      <path d="M279 447L285 439" stroke="#d42525" />
      <path d="M291 430L283 437L287 440Z" fill="#d42525" stroke="#c02020" />
      <text x="273" y="409" fill="#d9dde2">Z</text>
      <text x="292" y="427" fill="#d9dde2">X</text>
      <text x="237" y="446" fill="#d9dde2">Y</text>
    </g>
  </Scene>
);

const tasks = [
  ['#a4cbe4', 1, 1], ['#c9cf4a', 1], ['#c77fc0', 1], ['#e8dcb0'], ['#c4373c'], ['#9aa4b5', 1], ['#5cc1f5'], ['#6fbf58', 0, 1],
  ['#d04a40', 0, 1], ['#9fd773', 0, 1], ['#111', 0, 1], ['#57c3da', 0, 1], ['#9aa3b0'], ['#4c58b8'],
  ['#1f6fc4'], ['#4a88b8'], ['#2f4f8f'],
];

const Updown = () => (
  <svg width="6" height="8" viewBox="0 0 6 8"><path d="M3 0L6 3H0ZM3 8L0 5H6Z" fill="#111" /></svg>
);

const App = () => {
  const [mode, setMode] = useState('update');
  return (
    <Shell>
      <GlobalStyle />
      <TitleBar>
        <Icon name="meshFull" size={11} />
        <Title>Untitled* - HyperMesh v12.0 - Ansys</Title>
        <WindowButton aria-label="minimize"><svg width="8" height="6"><path d="M0 2H8V5H0Z" fill="#fff" stroke="#566" /></svg></WindowButton>
        <WindowButton aria-label="restore"><svg width="8" height="7"><path d="M3 1H7V4H5M1 3H5V6H1Z" fill="#fff" stroke="#566" /></svg></WindowButton>
        <WindowButton $close aria-label="close"><svg width="8" height="7"><path d="M1 1L7 6M7 1L1 6" stroke="#fff" strokeWidth="2" /></svg></WindowButton>
      </TitleBar>
      <MenuBar>
        {menus.map(([pre, key, post]) => <MenuLink href="#" key={pre + key + post}>{pre}<u>{key}</u>{post}</MenuLink>)}
      </MenuBar>
      <ToolBar>
        <Handle />
        <Tools width={65} names={['newDoc', 'open', 'save', 'importFile']} /><DropArrow />
        <Tool name="exportFile" /><DropArrow /><Divider />
        <Tools width={33} names={['user', 'loadUser']} /><DropArrow />
        <Handle />
        <Tools width={168} names={['zoomIn', 'back', 'xyTop', 'xyBottom', 'xzLeft', 'xzRight', 'yzLeft', 'yzRight', 'iso', 'userView']} />
        <Handle />
        <Tools width={117} names={['fit', 'zoomWin', 'cross', 'hand', 'leftRight', 'upDown', 'spin']} />
        <Handle />
        <Tools width={152} names={['distance', 'ruler', 'mass', 'cubeRed', 'cubeWire', 'cubeTop', 'meshArrow', 'meshCut', 'meshCheck']} />
        <Divider />
        <Tools width={52} names={['sigmaInfo', 'sigmaBang', 'table']} />
        <Handle />
        <Tools width={33} names={['docNew', 'docOpen']} /><DropArrow />
        <Tools width={33} names={['docRun', 'docNext']} /><DropArrow />
        <Divider />
        <Tools width={50} names={['sigmaNew', 'sigmaOpen', 'sigmaDoc']} />
      </ToolBar>

      <Body>
        <Browser>
          <CloseTab aria-label="close browser">×</CloseTab>
          <Tabs>
            {['Utility', 'Mask', 'Model', 'Connector', 'Export'].map(name => (
              <Tab key={name} $active={name === 'Model'}>{name}</Tab>
            ))}
          </Tabs>
          <BrowserTools $gap={1}>
            {['folderGray', 'share', 'folderSlab', 'folderMat', 'folderProp', 'pale', 'loads'].map((name, i) => (
              <Tool key={name} name={name} active={i === 0} />
            ))}
          </BrowserTools>
          <BrowserTools>
            <Tool name="comps" /><DropArrow />
            <Tools width={33} names={['treeCheck', 'treeUncheck']} />
            <Tool name="slab" /><DropArrow />
            <Tool name="comps" /><DropArrow />
            <Tools width={91} names={['pointer', 'highlight', 'eyeBoth', 'eyeOne', 'undo']} />
          </BrowserTools>
          <TreePane>
            <TreeTable>
              <colgroup><Col $width={83} /><Col $width={15} /><Col $width={17} /><Col $width={17} /><Col /></colgroup>
              <thead>
                <tr>
                  <th>Entities</th><th>ID</th>
                  <th aria-label="Color"><Icon name="wheel" size={9} /></th>
                  <th aria-label="Mesh"><Icon name="cubeFill" size={9} /></th>
                  <th aria-label="Geometry"><Icon name="surf" size={9} /></th>
                </tr>
              </thead>
              <tbody>{nodes.map(node => <TreeRow key={node.text} node={node} />)}</tbody>
            </TreeTable>
          </TreePane>
        </Browser>

        <Work>
          <Stage>
            <SideTools>
              {['maskBox', 'maskArrow', 'maskHalf', 'meshFull', 'meshBox', 'meshCircle', 'find', 'numbers', 'names', 'loadNames', 'shape'].map((name, i) => (
                <Tool key={name} name={name} active={i > 8} />
              ))}
            </SideTools>
            <Viewport>
              <Model />
              <ModelInfo>Model Info: Untitled*</ModelInfo>
            </Viewport>
          </Stage>

          <ToolBar $height={20}>
            <Handle />
            <Tools width={100} names={['open', 'folderComp', 'folderMaterial', 'folderProperty', 'loadFolder', 'axisFolder']} />
            <DropArrow /><Divider />
            <Tools width={66} names={['remove', 'stack', 'move', 'renumber']} />
            <Handle />
            <Combo $width={59}>
              <Icon name="shadeCombo" size={12} />
              <select aria-label="Shading"><option>Auto</option></select>
            </Combo>
            <Tool name="surfPale" /><DropArrow />
            <Tool name="surf" /><DropArrow />
            <Tool name="cubeFill" /><Divider />
            <Combo $width={66}>
              <Icon name="cubeCombo" size={12} />
              <select aria-label="Color mode"><option>By Comp</option></select>
            </Combo>
            <Tool name="cubeOutline" /><DropArrow />
            <Tool name="cubeGrid" /><DropArrow />
            <Tool name="slabRed" /><DropArrow />
            <Tool name="slabBlue" /><DropArrow />
            <Tool name="pieces" /><Tool name="monitor" />
            <Mark $x={29} $y={-4}><path d="M1 1L3 0V9" /></Mark>
          </ToolBar>

          <Panel onSubmit={e => e.preventDefault()}>
            <Modes>
              {['create', 'update', 'assign'].map(name => (
                <Mode key={name}>
                  <input type="radio" name="mode" checked={mode === name} onChange={() => setMode(name)} />
                  {name}
                </Mode>
              ))}
              <Mark $x={-11} $y={14}><path d="M0 0Q8 -1 9 3Q9 7 5 11Q10 9 16 10" /></Mark>
            </Modes>
            <Fields>
              <Row>
                <CompsButton type="button" $width={158}>comps</CompsButton>
                <FlatButton type="button" $width={26} aria-label="reset selection">
                  <svg width="7" height="7"><path d="M0 0H2V7H0ZM6 0V7L2 3.5Z" fill="#111" /></svg>
                </FlatButton>
              </Row>
              <Row>
                <FlatButton type="button" $width={79} $left><Swatch $color="#0e0" />color</FlatButton>
              </Row>
              <Row>
                <FlatButton type="button" $width={26} aria-label="choose card image">
                  <svg width="8" height="4"><path d="M0 0H8L4 4Z" fill="#111" /></svg>
                </FlatButton>
                <FlatButton type="button" $width={158}>card image =</FlatButton>
                <Entry><input aria-label="card image" defaultValue="HM_COMP" /></Entry>
              </Row>
              <Row>
                <FlatButton type="button" $width={26} aria-label="toggle property"><Updown /></FlatButton>
                <FlatButton type="button" $width={158}>property &nbsp;=</FlatButton>
                <Entry><input aria-label="property" defaultValue="steel" /></Entry>
              </Row>
              <Row $indent={26}><Plain $width={106}>card image =</Plain><Plain>SOLID185p</Plain></Row>
              <Row>
                <FlatButton type="button" $width={26} aria-label="toggle material"><Updown /></FlatButton>
                <FlatButton type="button" $width={185}>material =</FlatButton>
                <Entry $selected><input aria-label="material" defaultValue="m_steel1" /></Entry>
              </Row>
              <Row $indent={26}><Plain $width={106}>card image &nbsp;=</Plain><Plain>MPDATA</Plain></Row>
              <Mark $x={113} $y={-6}><path d="M0 0L8 4L12 7Q12 9 5 12Q14 11 15 14Q14 18 3 23" /></Mark>
              <Mark $x={288} $y={15}><path d="M0 1Q7 0 14 1M3 1L2 8Q11 6 12 10Q12 16 0 17" /></Mark>
              <Mark $x={254} $y={37}><path d="M13 1Q10 0 8 3L1 11Q-1 18 2 18Q5 19 9 17L15 12L13 10Q9 9 4 12" /></Mark>
              <Mark $x={173} $y={50}><path d="M0 1L9 0Q8 6 6 10" /></Mark>
              <Mark $x={315} $y={60}><path d="M22 5L12 9L2 14Q0 17 4 17L15 16V12L1 3V1L18 2Q18 5 13 9L3 14" /></Mark>
            </Fields>
            <Actions>
              <ActionButton $focused>update</ActionButton>
              <ActionButton type="button">update/edit</ActionButton>
              <ActionButton type="button" $spaced>create prop</ActionButton>
              <ActionButton type="button">create mat</ActionButton>
              <ActionButton type="button">reset</ActionButton>
              <ActionButton type="button" $danger>return</ActionButton>
              <Mark $x={62} $y={-7}><path d="M29 9Q28 1 24 1H11Q8 3 7 5L15 6L23 5L12 11L0 18" /></Mark>
            </Actions>
          </Panel>

          <Console>
            <Output><b>Main console display active (Tcl8.5.9 / Tk8.5.9)</b>{'\n(Documents) 1 %'}</Output>
            <Scroll>
              <ScrollButton aria-label="scroll up">▲</ScrollButton>
              <ScrollButton aria-label="scroll down">▼</ScrollButton>
            </Scroll>
          </Console>
        </Work>
      </Body>

      <StatusBar>
        <StatusText>Components: Update</StatusText>
        <StatusCell $width={75} />
        <StatusCell $width={85}><Swatch $color="#00f" />3d_xia</StatusCell>
        <StatusCell $width={84} />
      </StatusBar>
      <TaskBar>
        {tasks.map(([color, bare, round], i) => <Task key={i} aria-label={`task ${i + 1}`} $color={color} $bare={bare} $round={round} />)}
      </TaskBar>
      <Upload>
        <UploadIcon>
          <svg width="14" height="11" viewBox="0 0 14 11" fill="none" stroke="#fff" strokeWidth="1.5">
            <circle cx="7" cy="3" r="2" /><circle cx="4" cy="7" r="2.5" /><circle cx="10" cy="7" r="2.5" />
          </svg>
        </UploadIcon>
        <span>拖拽上传</span>
      </Upload>
      <Bubble>44</Bubble>
    </Shell>
  );
};

export default App;
